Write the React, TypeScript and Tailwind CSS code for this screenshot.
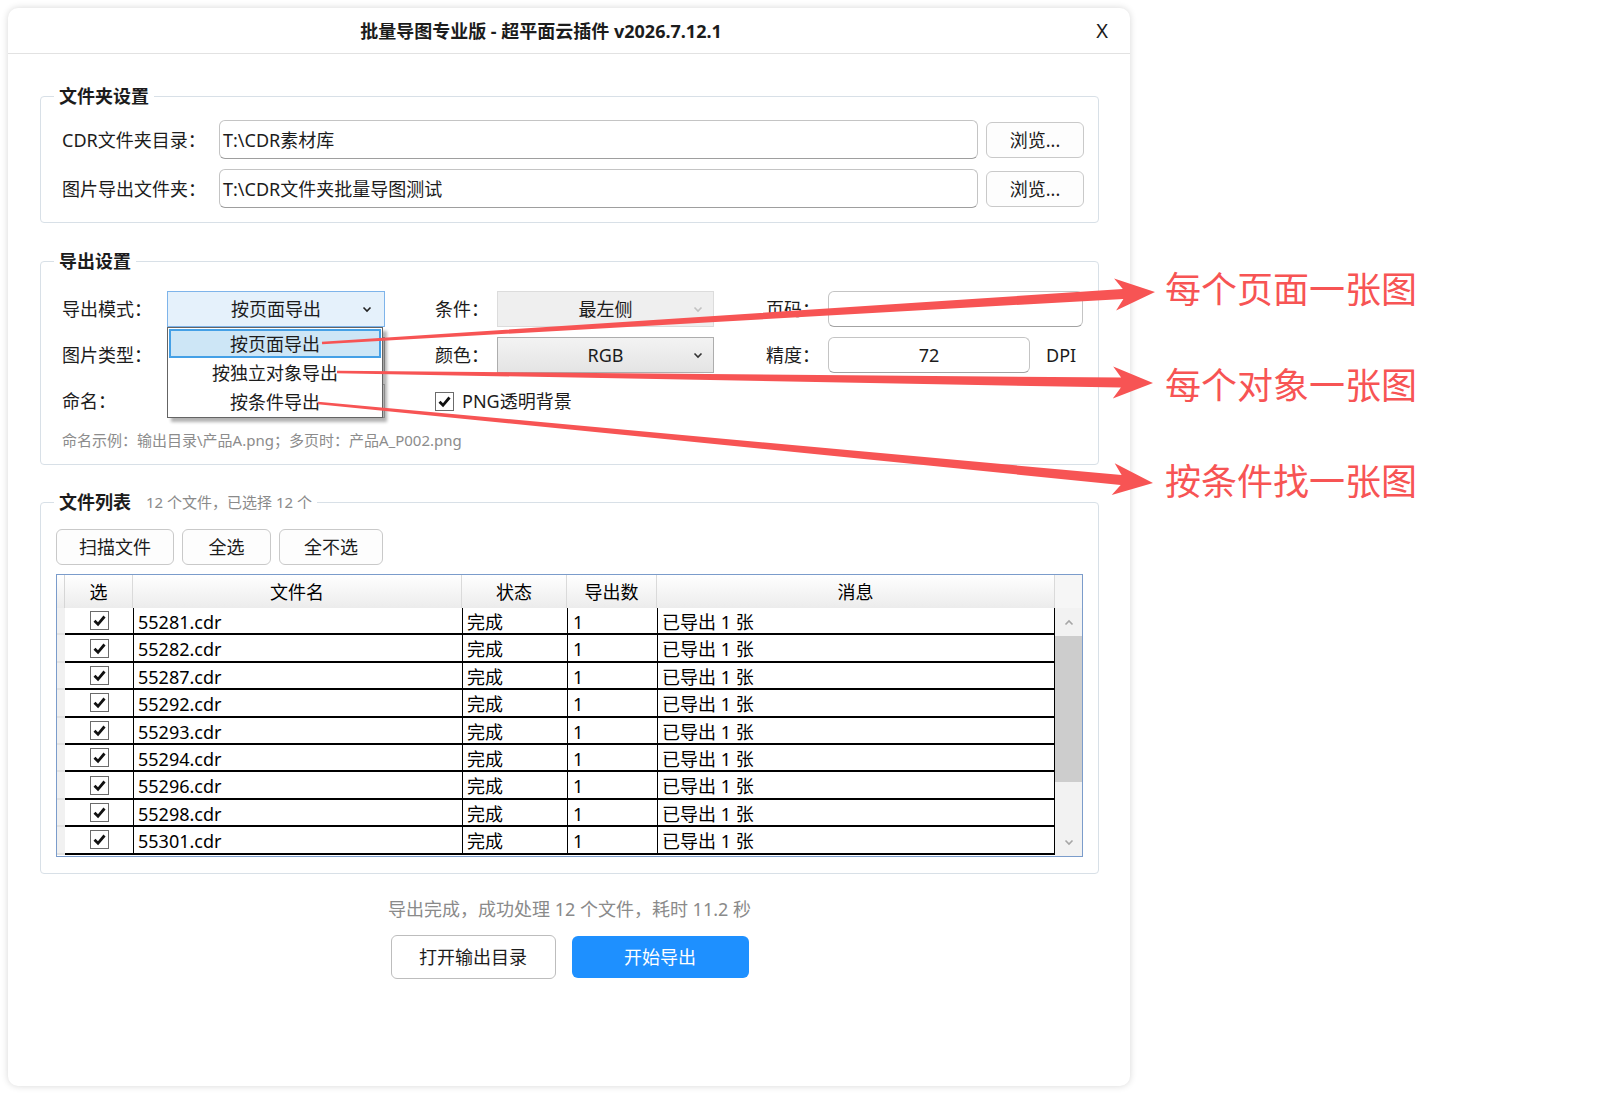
import React from "react";

type Pt = [number, number];

// tapered annotation arrow: thin tail, swept head
function arrowPoints(from: Pt, to: Pt) {
  const [sx, sy] = from;
  const [tx, ty] = to;
  const len = Math.hypot(tx - sx, ty - sy);
  const ux = (tx - sx) / len;
  const uy = (ty - sy) / len;
  const nx = -uy;
  const ny = ux;
  const headL = 40;
  const headW = 16;
  const w0 = 1.2;
  const w1 = 5;
  const bx = tx - ux * headL;
  const by = ty - uy * headL;
  const jx = tx - ux * (headL - 8);
  const jy = ty - uy * (headL - 8);
  const pts: Pt[] = [
    [sx + nx * w0, sy + ny * w0],
    [jx + nx * w1, jy + ny * w1],
    [bx + nx * headW, by + ny * headW],
    [tx, ty],
    [bx - nx * headW, by - ny * headW],
    [jx - nx * w1, jy - ny * w1],
    [sx - nx * w0, sy - ny * w0],
  ];
  return pts.map((p) => `${p[0].toFixed(1)},${p[1].toFixed(1)}`).join(" ");
}

const arrows: [Pt, Pt][] = [
  [[322, 343], [1155, 292]],
  [[337, 372], [1153, 383]],
  [[318, 403], [1153, 483]],
];

function Chevron({ className }: { className: string }) {
  return (
    <svg width="10" height="7" viewBox="0 0 10 7" className={className}>
      <path d="M1.5 1.5 L5 5 L8.5 1.5" fill="none" stroke="currentColor" strokeWidth="1.6" />
    </svg>
  );
}

function CheckBox() {
  return (
    <div className="w-[19px] h-[19px] border border-[#6b6b6b] bg-white flex items-center justify-center">
      <svg width="15" height="15" viewBox="0 0 15 15">
        <path d="M2.5 7.8 L6 11.3 L12.5 3.5" fill="none" stroke="#111" strokeWidth="2.8" />
      </svg>
    </div>
  );
}

// rows in view (list is scrolled to the top)
const files = [
  "55281.cdr",
  "55282.cdr",
  "55287.cdr",
  "55292.cdr",
  "55293.cdr",
  "55294.cdr",
  "55296.cdr",
  "55298.cdr",
  "55301.cdr",
];

function PathRow({ label, value }: { label: string; value: string }) {
  return (
    <div className="flex items-center h-[39px]">
      <div className="w-[157px]">{label}</div>
      <div className="flex-1 h-[39px] border border-[#c4c4c4] border-b-[#9e9e9e] rounded-[6px] bg-white flex items-center pl-[3px]">
        {value}
      </div>
      <button className="ml-[8px] w-[98px] h-[36px] border border-[#c9c9c9] rounded-[6px] bg-[#fdfdfd]">
        浏览...
      </button>
    </div>
  );
}

export default function App() {
  return (
    <div className="relative w-[1614px] h-[1095px] bg-white flex items-start overflow-hidden font-['Noto_Sans','Noto_Sans_CJK_SC',sans-serif] text-[18px] leading-[24px] text-[#1c1c1c]">
      {/* dialog window */}
      <div className="ml-[8px] mt-[8px] w-[1122px] h-[1078px] shrink-0 bg-white rounded-[10px] shadow-[0_0_7px_rgba(0,0,0,0.16)] flex flex-col">
        <div className="h-[46px] shrink-0 border-b border-[#e2e2e2] flex items-center">
          <div className="flex-1 text-center font-bold">批量导图专业版 - 超平面云插件 v2026.7.12.1</div>
          <div className="w-[56px] text-center text-[20px]">X</div>
        </div>

        <div className="pl-[32px] pr-[31px] flex flex-col">
          {/* folder settings */}
          <fieldset className="mt-[30px] border border-[#d8e0e7] rounded-[4px] pl-[21px] pr-[14px] pt-[12px] pb-[14px] flex flex-col gap-[10px]">
            <legend className="-ml-[8px] px-[5px] font-bold">文件夹设置</legend>
            <PathRow label="CDR文件夹目录：" value="T:\CDR素材库" />
            <PathRow label="图片导出文件夹：" value="T:\CDR文件夹批量导图测试" />
          </fieldset>

          {/* export settings */}
          <fieldset className="mt-[26px] border border-[#d8e0e7] rounded-[4px] pl-[21px] pr-[14px] pt-[18px] pb-[14px] flex flex-col">
            <legend className="-ml-[8px] px-[5px] font-bold">导出设置</legend>
            <div className="flex flex-col gap-[10px]">
              <div className="flex items-center h-[36px]">
                <div className="w-[105px]">导出模式：</div>
                <div className="relative w-[218px] h-[36px]">
                  <div className="h-full border border-[#7eb4ea] bg-[#e5f1fb] flex items-center justify-center relative">
                    按页面导出
                    <Chevron className="absolute right-[12px] top-[14px] text-[#222]" />
                  </div>
                  <div className="absolute left-0 top-full w-[216px] z-10 bg-white border border-[#646464] p-[1px] shadow-[4px_4px_3px_rgba(0,0,0,0.3)]">
                    <div className="h-[29px] border-2 border-[#44a0e6] bg-[#cde6f6] flex items-center justify-center">按页面导出</div>
                    <div className="h-[29px] flex items-center justify-center">按独立对象导出</div>
                    <div className="h-[29px] flex items-center justify-center">按条件导出</div>
                  </div>
                </div>
                <div className="w-[50px]" />
                <div className="w-[62px]">条件：</div>
                <div className="w-[217px] h-[36px] border border-[#dcdcdc] bg-[#efefef] flex items-center justify-center relative">
                  最左侧
                  <Chevron className="absolute right-[10px] top-[14px] text-[#c2c2c2]" />
                </div>
                <div className="w-[52px]" />
                <div className="w-[62px]">页码：</div>
                <div className="w-[255px] h-[36px] border border-[#c4c4c4] border-b-[#a3a3a3] rounded-[6px] bg-white" />
              </div>

              <div className="flex items-center h-[36px]">
                <div className="w-[105px]">图片类型：</div>
                <div className="w-[218px] h-[36px] border border-[#adadad] bg-[#ececec]" />
                <div className="w-[50px]" />
                <div className="w-[62px]">颜色：</div>
                <div className="w-[217px] h-[36px] border border-[#adadad] bg-linear-to-b from-[#f3f3f3] to-[#e4e4e4] flex items-center justify-center relative">
                  RGB
                  <Chevron className="absolute right-[10px] top-[14px] text-[#333]" />
                </div>
                <div className="w-[52px]" />
                <div className="w-[62px]">精度：</div>
                <div className="w-[202px] h-[36px] border border-[#c4c4c4] border-b-[#a3a3a3] rounded-[6px] bg-white flex items-center justify-center">72</div>
                <div className="ml-[16px]">DPI</div>
              </div>

              <div className="flex items-center h-[36px]">
                <div className="w-[105px]">命名：</div>
                <div className="w-[218px] h-[34px] border border-[#c4c4c4] bg-white" />
                <div className="w-[50px]" />
                <CheckBox />
                <div className="ml-[8px]">PNG透明背景</div>
              </div>
            </div>
            <div className="mt-[11px] text-[15px] leading-[20px] text-[#8c8c8c]">
              命名示例：输出目录\产品A.png；多页时：产品A_P002.png
            </div>
          </fieldset>

          {/* file list */}
          <fieldset className="mt-[25px] border border-[#d8e0e7] rounded-[4px] px-[15px] pt-[15px] pb-[16px] flex flex-col">
            <legend className="-ml-[2px] px-[5px] flex items-center">
              <span className="font-bold">文件列表</span>
              <span className="ml-[15px] text-[15px] text-[#8a8a8a]">12 个文件，已选择 12 个</span>
            </legend>
            <div className="flex gap-[8px]">
              <button className="w-[118px] h-[36px] border border-[#c9c9c9] rounded-[6px] bg-[#fdfdfd]">扫描文件</button>
              <button className="w-[89px] h-[36px] border border-[#c9c9c9] rounded-[6px] bg-[#fdfdfd]">全选</button>
              <button className="w-[104px] h-[36px] border border-[#c9c9c9] rounded-[6px] bg-[#fdfdfd]">全不选</button>
            </div>

            <div className="mt-[9px] h-[283px] border border-[#7b9ccb] flex flex-col text-black">
              <div className="h-[33px] shrink-0 flex bg-linear-to-b from-white to-[#ececec]">
                <div className="w-[8px] border-r border-[#d6d6d6]" />
                <div className="w-[68px] border-r border-[#dadada] flex items-center justify-center">选</div>
                <div className="w-[329px] border-r border-[#dadada] flex items-center justify-center">文件名</div>
                <div className="w-[105px] border-r border-[#dadada] flex items-center justify-center">状态</div>
                <div className="w-[90px] border-r border-[#dadada] flex items-center justify-center">导出数</div>
                <div className="w-[398px] border-r border-[#dadada] flex items-center justify-center">消息</div>
                <div className="flex-1 bg-[#f6f6f6]" />
              </div>
              <div className="flex-1 min-h-0 flex">
                <div className="flex-1">
                  {files.map((f) => (
                    <div key={f} className="h-[27.4px] flex">
                      <div className="w-[8px] bg-[#f1f1f1] border-b-2 border-[#e2e2e2]" />
                      <div className="flex-1 flex border-b-2 border-black">
                        <div className="w-[68px] flex items-center justify-center">
                          <CheckBox />
                        </div>
                        <div className="w-[329px] border-l border-black pl-[4px] pt-[2px]">{f}</div>
                        <div className="w-[105px] border-l border-black pl-[4px] pt-[2px]">完成</div>
                        <div className="w-[90px] border-l border-black pl-[5px] pt-[2px]">1</div>
                        <div className="flex-1 border-l border-r border-black pl-[4px] pt-[2px]">已导出 1 张</div>
                      </div>
                    </div>
                  ))}
                </div>
                <div className="w-[27px] bg-[#f2f2f2] flex flex-col">
                  <div className="h-[28px] flex items-center justify-center">
                    <Chevron className="rotate-180 text-[#a6a6a6]" />
                  </div>
                  <div className="h-[146px] bg-[#cdcdcd]" />
                  <div className="flex-1" />
                  <div className="h-[28px] flex items-center justify-center">
                    <Chevron className="text-[#a6a6a6]" />
                  </div>
                </div>
              </div>
            </div>
          </fieldset>

          <div className="mt-[23px] text-center text-[#8a8a8a]">导出完成，成功处理 12 个文件，耗时 11.2 秒</div>
          <div className="mt-[14px] flex justify-center gap-[16px]">
            <button className="w-[165px] h-[44px] border border-[#bdbdbd] rounded-[6px] bg-white">打开输出目录</button>
            <button className="w-[177px] h-[42px] mt-[1px] rounded-[6px] bg-[#1e90ff] text-white">开始导出</button>
          </div>
        </div>
      </div>

      {/* callout captions */}
      <div className="ml-[35px] mt-[266px] flex flex-col gap-[48px] text-[36px] leading-[48px] text-[#f75454] whitespace-nowrap">
        <div>每个页面一张图</div>
        <div>每个对象一张图</div>
        <div>按条件找一张图</div>
      </div>

      <svg className="absolute inset-0 pointer-events-none z-20" width={1614} height={1095}>
        {arrows.map(([a, b], i) => (
          <polygon key={i} points={arrowPoints(a, b)} fill="#f75454" />
        ))}
      </svg>
    </div>
  );
}
